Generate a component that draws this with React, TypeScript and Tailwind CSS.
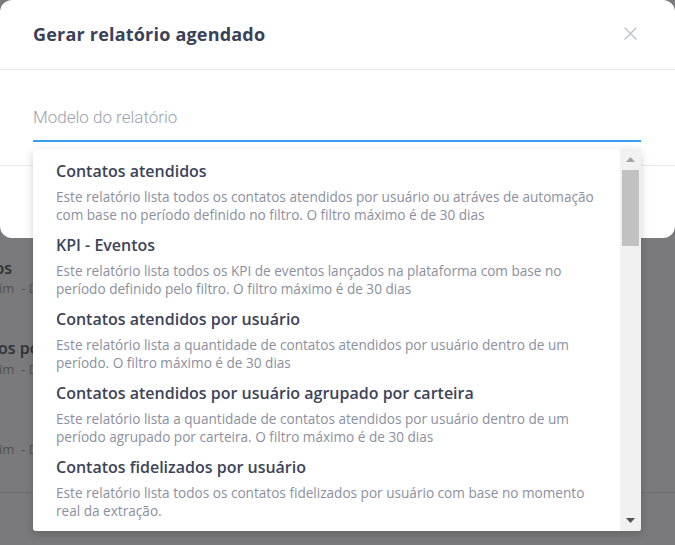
import React from "react";

const items: { title: string; lines: string[] }[] = [
  {
    title: "Contatos atendidos",
    lines: [
      "Este relatório lista todos os contatos atendidos por usuário ou atráves de automação",
      "com base no período definido no filtro. O filtro máximo é de 30 dias",
    ],
  },
  {
    title: "KPI - Eventos",
    lines: [
      "Este relatório lista todos os KPI de eventos lançados na plataforma com base no",
      "período definido pelo filtro. O filtro máximo é de 30 dias",
    ],
  },
  {
    title: "Contatos atendidos por usuário",
    lines: [
      "Este relatório lista a quantidade de contatos atendidos por usuário dentro de um",
      "período. O filtro máximo é de 30 dias",
    ],
  },
  {
    title: "Contatos atendidos por usuário agrupado por carteira",
    lines: [
      "Este relatório lista a quantidade de contatos atendidos por usuário dentro de um",
      "período agrupado por carteira. O filtro máximo é de 30 dias",
    ],
  },
  {
    title: "Contatos fidelizados por usuário",
    lines: [
      "Este relatório lista todos os contatos fidelizados por usuário com base no momento",
      "real da extração.",
    ],
  },
];

export default function App() {
  return (
    <div
      className="relative w-[675px] h-[545px] overflow-hidden bg-[#7a7a7c]"
      style={{ fontFamily: '"Open Sans", "Liberation Sans", sans-serif' }}
    >
      {/* background page (dimmed) */}
      <div className="flex flex-col pt-[257px]">
        <div className="flex flex-col h-[80px]">
          <div className="flex justify-end w-[12px] overflow-hidden whitespace-nowrap text-[16px] leading-[22px] font-semibold text-[#2f3034]">
            Contatos
          </div>
          <div className="whitespace-nowrap text-[13px] leading-[18px] text-[#505154] -ml-[1px]">
            im &nbsp;- Diário
          </div>
        </div>
        <div className="flex flex-col h-[80px]">
          <div className="whitespace-nowrap text-[16px] leading-[22px] font-semibold text-[#2f3034] -ml-[2px]">
            os por usuário
          </div>
          <div className="whitespace-nowrap text-[13px] leading-[18px] text-[#505154] -ml-[1px] mt-[1px]">
            im &nbsp;- Diário
          </div>
        </div>
        <div className="flex flex-col h-[75px]">
          <div className="h-[22px]" />
          <div className="whitespace-nowrap text-[13px] leading-[18px] text-[#505154] -ml-[1px] mt-[1px]">
            im &nbsp;- Diário
          </div>
        </div>
        <div className="border-t border-[#6f6f71]" />
      </div>

      {/* modal */}
      <div className="absolute left-0 top-0 w-[675px] h-[238px] bg-white rounded-[12px] flex flex-col">
        <div className="h-[70px] shrink-0 flex items-center justify-between pl-[33px] pr-[38px] border-b border-[#e9e9ec]">
          <div className="text-[18px] font-bold text-[#3a4157] tracking-[0.2px]">
            Gerar relatório agendado
          </div>
          <svg width="13" height="13" viewBox="0 0 13 13" className="mt-[-3px]">
            <path d="M1 1 L12 12 M12 1 L1 12" stroke="#c3c6ce" strokeWidth="1.6" strokeLinecap="round" />
          </svg>
        </div>
        <div className="h-[96px] shrink-0 px-[33px] pt-[36px] border-b border-[#ececee]">
          <div
            className="text-[17px] leading-[22px] font-light text-[#9ca1ae]"
            style={{ fontFamily: 'Roboto, "Open Sans", sans-serif' }}
          >
            Modelo do relatório
          </div>
          <div className="mt-[12px] h-[2px] bg-[#33a0f2] w-[608px]" />
        </div>
      </div>

      {/* dropdown */}
      <div className="absolute left-[33px] top-[149px] w-[608px] h-[382px] bg-white shadow-[0_3px_10px_rgba(0,0,0,0.18)] rounded-b-[3px] flex overflow-hidden">
        <div className="flex-1 flex flex-col pt-[6px] overflow-hidden">
          {items.map((it) => (
            <div key={it.title} className="flex flex-col pl-[23px] py-[5px]">
              <div className="text-[16px] leading-[22px] font-semibold text-[#3d4459] whitespace-nowrap">
                {it.title}
              </div>
              <div className="mt-[6px] flex flex-col text-[13.6px] leading-[18px] text-[#8b8fa0]">
                {it.lines.map((l) => (
                  <div key={l} className="whitespace-nowrap">
                    {l}
                  </div>
                ))}
              </div>
            </div>
          ))}
        </div>
        <div className="w-[21px] shrink-0 bg-[#f1f1f1] flex flex-col items-center">
          <div className="h-[21px] flex items-center justify-center">
            <svg width="9" height="5" viewBox="0 0 9 5">
              <path d="M0 5 L4.5 0 L9 5 Z" fill="#a3a3a3" />
            </svg>
          </div>
          <div className="w-[17px] h-[76px] bg-[#c1c1c1]" />
          <div className="flex-1" />
          <div className="h-[21px] flex items-center justify-center">
            <svg width="9" height="5" viewBox="0 0 9 5">
              <path d="M0 0 L9 0 L4.5 5 Z" fill="#505050" />
            </svg>
          </div>
        </div>
      </div>
    </div>
  );
}
